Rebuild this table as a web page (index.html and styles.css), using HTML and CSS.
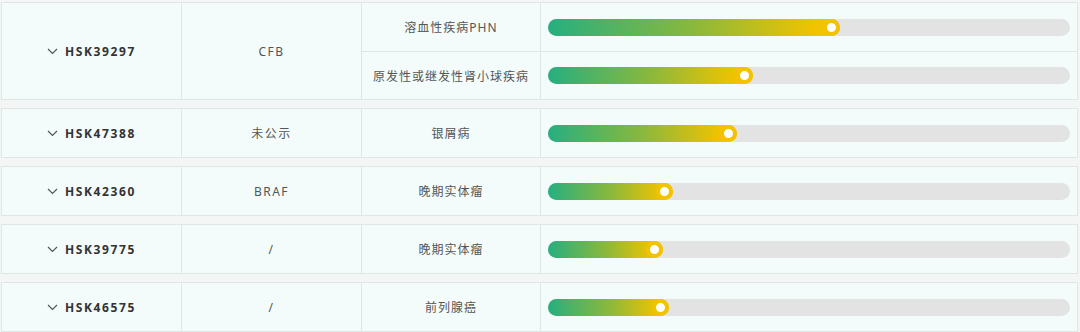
FILE: index.html
```html
<!DOCTYPE html>
<html lang="zh-CN">
<head>
<meta charset="utf-8">
<title>Pipeline</title>
<link rel="stylesheet" href="styles.css">
</head>
<body>
<div class="list">
  <div class="group">
    <div class="cell id span2"><span class="chev"><svg width="11" height="7" viewBox="0 0 11 7"><path d="M1 1l4.5 4.5L10 1" fill="none" stroke="#555" stroke-width="1.2"/></svg></span>HSK39297</div>
    <div class="cell target span2">CFB</div>
    <div class="cell ind">溶血性疾病PHN</div>
    <div class="cell prog"><div class="track"><div class="fill" style="width:56%"></div></div></div>
    <div class="cell ind sub">原发性或继发性肾小球疾病</div>
    <div class="cell prog sub"><div class="track"><div class="fill" style="width:39.2%"></div></div></div>
  </div>
  <div class="group">
    <div class="cell id"><span class="chev"><svg width="11" height="7" viewBox="0 0 11 7"><path d="M1 1l4.5 4.5L10 1" fill="none" stroke="#555" stroke-width="1.2"/></svg></span>HSK47388</div>
    <div class="cell target">未公示</div>
    <div class="cell ind">银屑病</div>
    <div class="cell prog"><div class="track"><div class="fill" style="width:36.3%"></div></div></div>
  </div>
  <div class="group">
    <div class="cell id"><span class="chev"><svg width="11" height="7" viewBox="0 0 11 7"><path d="M1 1l4.5 4.5L10 1" fill="none" stroke="#555" stroke-width="1.2"/></svg></span>HSK42360</div>
    <div class="cell target">BRAF</div>
    <div class="cell ind">晚期实体瘤</div>
    <div class="cell prog"><div class="track"><div class="fill" style="width:23.9%"></div></div></div>
  </div>
  <div class="group">
    <div class="cell id"><span class="chev"><svg width="11" height="7" viewBox="0 0 11 7"><path d="M1 1l4.5 4.5L10 1" fill="none" stroke="#555" stroke-width="1.2"/></svg></span>HSK39775</div>
    <div class="cell target">/</div>
    <div class="cell ind">晚期实体瘤</div>
    <div class="cell prog"><div class="track"><div class="fill" style="width:22%"></div></div></div>
  </div>
  <div class="group">
    <div class="cell id"><span class="chev"><svg width="11" height="7" viewBox="0 0 11 7"><path d="M1 1l4.5 4.5L10 1" fill="none" stroke="#555" stroke-width="1.2"/></svg></span>HSK46575</div>
    <div class="cell target">/</div>
    <div class="cell ind">前列腺癌</div>
    <div class="cell prog"><div class="track"><div class="fill" style="width:23.1%"></div></div></div>
  </div>
</div>
</body>
</html>
```
FILE: styles.css
```css
html, body {
  margin: 0;
  padding: 0;
  background: #f4f6f6;
}
body {
  font-family: "Noto Sans", "Noto Sans CJK SC", sans-serif;
  color: #555;
}
.list {
  display: flex;
  flex-direction: column;
  gap: 8px;
  padding: 2px 2px 0 1px;
}
.group {
  display: grid;
  grid-template-columns: 179px 180px 179px 1fr;
  grid-auto-rows: 48px;
  border: 1px solid #dfe7e6;
  background: #f3fcfb;
}
.cell {
  display: flex;
  align-items: center;
  justify-content: center;
  font-size: 12px;
  letter-spacing: 1px;
  border-left: 1px solid #dfe7e6;
}
.cell.id {
  border-left: none;
  font-weight: bold;
  color: #333;
  letter-spacing: 1.6px;
}
.span2 {
  grid-row: span 2;
}
.cell.target {
  letter-spacing: 1.5px;
}
.cell.sub {
  border-top: 1px solid #dfe7e6;
}
.chev {
  display: inline-flex;
  margin-right: 7px;
  margin-top: 1px;
}
.cell.prog {
  justify-content: stretch;
  padding: 0 7px 0 7px;
}
.track {
  flex: 1;
  height: 17px;
  border-radius: 9px;
  background: #e3e3e3;
}
.fill {
  position: relative;
  height: 100%;
  border-radius: 9px;
  background: linear-gradient(90deg, #26af80 0%, #8ab83c 50%, #f2c300 92%, #f2c300 100%);
}
.fill::after {
  content: "";
  position: absolute;
  right: 0;
  top: 50%;
  width: 9px;
  height: 9px;
  margin-top: -8.5px;
  border: 4px solid #f2c300;
  border-radius: 50%;
  background: #fff;
}
```
